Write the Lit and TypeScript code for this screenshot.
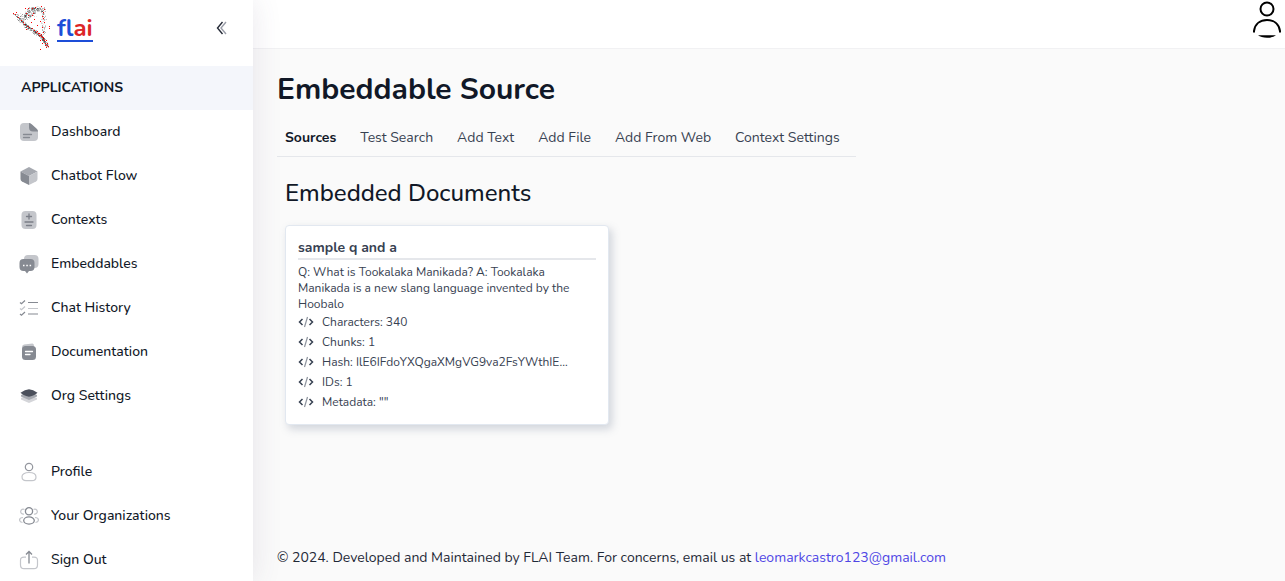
import { LitElement, html, svg, css } from 'lit';
import { customElement, state } from 'lit/decorators.js';

const icons = {
  dashboard: svg`
    <path d="M5 1h6l8 8v6a4 4 0 0 1-4 4H5a4 4 0 0 1-4-4V5a4 4 0 0 1 4-4z" fill="#c4c6cb"/>
    <path d="M10 1q1.500 0 3 1.500L18 7q1 1 1 2.500h-5a4 4 0 0 1-4-4z" fill="#868a92"/>
    <path d="M4.500 12.500h8M4.500 15.500h6" stroke="#868a92" stroke-width="1.300" stroke-linecap="round"/>`,
  cube: svg`
    <path d="M10 1l8.500 4.500L10 10 1.500 5.500z" fill="#a6a9b0"/>
    <path d="M1.500 5.500L10 10v9L3 15.500q-1.500-.8-1.500-2.500z" fill="#868a92"/>
    <path d="M18.500 5.500L10 10v9l7-3.500q1.500-.8 1.500-2.500z" fill="#c4c6cb"/>`,
  contexts: svg`
    <rect x="2.500" y="1" width="15" height="18" rx="4" fill="#c4c6cb"/>
    <path d="M10 4v5M7.500 6.500h5M6 12h8M7.500 15.500h5" stroke="#7b7f88" stroke-width="1.300" stroke-linecap="round"/>`,
  chat: svg`
    <rect x="5" y="1" width="14.500" height="13" rx="4" fill="#c4c6cb"/>
    <path d="M4.500 5h7a4 4 0 0 1 4 4v4a4 4 0 0 1-4 4H10l-2 2.500L6 17H4.500a4 4 0 0 1-4-4V9a4 4 0 0 1 4-4z" fill="#868a92"/>
    <path d="M4 11.500h1.500M7.300 11.500h1.500M10.600 11.500h1.500" stroke="#fff" stroke-width="1.500"/>`,
  list: svg`
    <path d="M1 4.500l1.500 1.300L6 2.500M1 16l1.500 1.300L6 14M9 4.500h10M9 16h10" fill="none" stroke="#868a92" stroke-width="1.200"/>
    <path d="M1 10.500l1.500 1.300L6 8.500M9 10.500h10" fill="none" stroke="#c4c6cb" stroke-width="1.200"/>`,
  document: svg`
    <path d="M5 2.500L13.500 1.500Q15 1.500 15 4v4H3V5q0-2 2-2.500z" fill="#c4c6cb"/>
    <rect x="3" y="4" width="14" height="14" rx="3.500" fill="#868a92"/>
    <path d="M6.500 9.500h7M6.500 12.500h4.500" stroke="#fff" stroke-width="1.300" stroke-linecap="round"/>`,
  layers: svg`
    <path d="M2 12l8-3 8 3v1.500L10 17l-8-3.500z" fill="#d4d5d9"/>
    <path d="M2 9l8-3 8 3v1.500L10 14l-8-3.500z" fill="#a6a9b0"/>
    <path d="M1.500 6.800Q6 3.500 10 3.200q4 .3 8.500 3.600Q14 10.500 10 10.700 6 10.500 1.500 6.800z" fill="#4b505c"/>`,
  profile: svg`
    <circle cx="10" cy="5" r="3.700" fill="none" stroke="#93969e" stroke-width="1.200"/>
    <path d="M3 14.500c0-2 2.500-4 7-4s7 2 7 4.500-1.500 3.700-4 3.700H7c-2.500 0-4-1.200-4-4.200z" fill="none" stroke="#c4c6cb" stroke-width="1.200"/>`,
  people: svg`
    <path d="M5.500 3.500A2.500 2.500 0 1 0 5 8M14.500 3.500A2.500 2.500 0 1 1 15 8M4 11.500c-5 .5-4 4.500-.5 5M16 11.500c5 .5 4 4.500.5 5" fill="none" stroke="#c4c6cb" stroke-width="1.200"/>
    <circle cx="10" cy="5.300" r="3.600" fill="none" stroke="#868a92" stroke-width="1.300"/>
    <ellipse cx="10" cy="14.500" rx="5.300" ry="3.600" fill="none" stroke="#868a92" stroke-width="1.300"/>`,
  signout: svg`
    <path d="M7 7.200H5q-3.500 0-3.500 3V15q0 3.700 3.500 3.700h10q3.500 0 3.500-3.700v-4.800q0-3-3.500-3h-2" fill="none" stroke="#c4c6cb" stroke-width="1.200"/>
    <path d="M10 13.500V1.500M7 4.500l3-3 3 3" fill="none" stroke="#868a92" stroke-width="1.300"/>`,
};

type IconName = keyof typeof icons;

const applications: { icon: IconName; label: string }[] = [
  { icon: 'dashboard', label: 'Dashboard' },
  { icon: 'cube', label: 'Chatbot Flow' },
  { icon: 'contexts', label: 'Contexts' },
  { icon: 'chat', label: 'Embeddables' },
  { icon: 'list', label: 'Chat History' },
  { icon: 'document', label: 'Documentation' },
  { icon: 'layers', label: 'Org Settings' },
];

const account: { icon: IconName; label: string }[] = [
  { icon: 'profile', label: 'Profile' },
  { icon: 'people', label: 'Your Organizations' },
  { icon: 'signout', label: 'Sign Out' },
];

const tabs = ['Sources', 'Test Search', 'Add Text', 'Add File', 'Add From Web', 'Context Settings'];

const facts = [
  'Characters: 340',
  'Chunks: 1',
  'Hash: IlE6IFdoYXQgaXMgVG9va2FsYWthIE...',
  'IDs: 1',
  'Metadata: ""',
];

/* Red specks of the logo mark, on a 40 x 46 grid. */
const specks: [number, number][] = [
  [1, 9], [3, 10], [4, 8], [6, 13], [9, 16], [11, 18], [13, 4], [16, 4], [20, 4], [23, 3],
  [29, 2], [32, 5], [31, 8], [21, 9], [20, 11], [16, 11], [14, 9], [30, 12], [31, 14], [22, 15],
  [28, 17], [32, 18], [37, 22], [37, 24], [12, 20], [15, 22], [17, 23], [20, 24], [22, 26], [25, 27],
  [26, 29], [27, 29], [28, 31], [29, 32], [30, 33], [31, 35], [32, 36], [33, 39], [35, 39], [28, 36],
  [35, 41], [28, 45], [30, 23], [31, 28], [33, 41], [25, 21], [19, 18], [14, 25], [24, 28], [27, 31],
  [34, 43], [36, 42], [30, 39], [29, 30], [31, 33], [34, 36],
];

/* Grey dust: curves given as start, control, end, spread and count. */
const trails = [
  [3, 10, 10, 20, 27, 31, 2, 200],
  [12, 20, 22, 26, 32, 35, 2, 160],
  [27, 30, 32, 36, 35, 42, 2, 130],
  [12, 13, 18, 0, 30, 6, 3, 200],
  [30, 5, 32, 18, 31, 30, 3, 80],
  [8, 12, 17, 14, 24, 5, 4, 120],
];

const dust = (() => {
  let seed = 11;
  const next = () => (seed = (seed * 16807) % 2147483647) / 2147483647;
  const out: { x: number; y: number; opacity: number }[] = [];
  for (const [x0, y0, x1, y1, x2, y2, spread, count] of trails) {
    for (let i = 0; i < count; i++) {
      const t = next();
      const u = 1 - t;
      out.push({
        x: Math.round(u * u * x0 + 2 * u * t * x1 + t * t * x2 + (next() + next() - 1) * spread),
        y: Math.round(u * u * y0 + 2 * u * t * y1 + t * t * y2 + (next() + next() - 1) * spread),
        opacity: [0.08, 0.14, 0.2, 0.3][Math.floor(next() * 4)],
      });
    }
  }
  return out;
})();

const base = css`
  :host { display: block; }
  *, *::before, *::after { box-sizing: border-box; }
  a { color: inherit; text-decoration: none; }
  h1, h2, h3, p, ul { margin: 0; padding: 0; font-weight: inherit; }
  ul { list-style: none; }
  button { border: 0; padding: 0; background: none; color: inherit; font: inherit; cursor: pointer; }
  svg { display: block; flex: none; }
`;

@customElement('side-bar')
export class SideBar extends LitElement {
  static styles = [base, css`
    :host { background: #fff; box-shadow: 0 0 28px rgba(82, 63, 105, 0.12); }
    .brand { display: flex; align-items: flex-start; justify-content: space-between; height: 66px; padding: 4px 25px 0 12px; }
    .logo { display: flex; align-items: flex-start; gap: 5px; }
    .name { margin-top: 9px; height: 29px; border-bottom: 2px solid #1d4ed8; color: #1d4ed8; font-size: 24px; line-height: 30px; font-weight: 700; }
    .accent { color: #dc2626; }
    .collapse { margin-top: 16px; }
    .heading { height: 44px; padding-left: 21px; background: #f4f6fb; font-size: 14px; line-height: 43px; font-weight: 700; }
    .item { display: flex; align-items: center; gap: 12px; height: 44px; padding-left: 19px; font-size: 14px; line-height: 20px; font-weight: 500; }
    .label { margin-bottom: 1px; }
    .account { margin-top: 32px; }
  `];

  private items(list: typeof applications) {
    return list.map(({ icon, label }) => html`
      <li><a class="item" href="#">
        <svg width="20" height="20" viewBox="0 0 20 20" aria-hidden="true">${icons[icon]}</svg>
        <span class="label">${label}</span>
      </a></li>`);
  }

  render() {
    return html`
      <div class="brand">
        <a class="logo" href="#">
          <svg width="40" height="46" viewBox="0 0 40 46" shape-rendering="crispEdges" aria-hidden="true">
            ${dust.map((d) => svg`<rect x=${d.x} y=${d.y} width="1" height="1" fill="#222" fill-opacity=${d.opacity}/>`)}
            ${specks.map(([x, y]) => svg`<rect x=${x} y=${y} width="1" height="1" fill="#f00"/>`)}
          </svg>
          <span class="name">fl<span class="accent">ai</span></span>
        </a>
        <button class="collapse" aria-label="Collapse menu">
          <svg width="14" height="16" viewBox="0 0 14 16" fill="none" stroke-width="1.400">
            <path d="M12 2L7 8l5 6" stroke="#9a9da8"/><path d="M8.500 2l-5 6 5 6" stroke="#252a37"/>
          </svg>
        </button>
      </div>
      <h2 class="heading">APPLICATIONS</h2>
      <nav>
        <ul>${this.items(applications)}</ul>
        <ul class="account">${this.items(account)}</ul>
      </nav>`;
  }
}

@customElement('document-card')
export class DocumentCard extends LitElement {
  static styles = [base, css`
    :host { width: 324px; padding: 12px; border: 1px solid #e2e8f0; border-radius: 4px; background: #fff; color: #374151; box-shadow: 3px 4px 8px rgba(100, 116, 139, 0.28); }
    .title { padding-bottom: 1px; border-bottom: 2px solid #e5e7eb; font-size: 14px; line-height: 19px; font-weight: 700; }
    .excerpt { margin-top: 4px; font-size: 12px; line-height: 16px; }
    .fact { display: flex; align-items: center; gap: 8px; font-size: 12px; line-height: 20px; }
  `];

  render() {
    return html`
      <h3 class="title">sample q and a</h3>
      <p class="excerpt">Q: What is Tookalaka Manikada? A: Tookalaka Manikada is a new slang language invented by the Hoobalo</p>
      <ul>
        ${facts.map((fact) => html`
          <li class="fact">
            <svg width="16" height="16" viewBox="0 0 16 16" fill="none" aria-hidden="true">
              <path d="M4.500 5l-3 3 3 3M11.500 5l3 3-3 3" stroke="#374151" stroke-width="1.500"/>
              <path d="M9.500 3l-3 10" stroke="#8f959f" stroke-width="1.200"/>
            </svg>
            <span>${fact}</span>
          </li>`)}
      </ul>`;
  }
}

@customElement('app-root')
export class AppRoot extends LitElement {
  static styles = [base, css`
    :host { display: grid; grid-template-columns: 253px minmax(0, 1fr); min-height: 100vh; background: #fafafa; color: #111827; font-family: Nunito, Lato, sans-serif; font-size: 14px; line-height: 20px; }
    side-bar { z-index: 1; }
    .page { display: flex; flex-direction: column; }
    .topbar { display: flex; justify-content: flex-end; height: 49px; padding-right: 3px; border-bottom: 1px solid #f1f1f3; background: #fff; }
    .user { align-self: flex-start; }
    .content { flex: 1; padding: 21px 24px 0; }
    .title { font-size: 30px; line-height: 40px; font-weight: 700; }
    .tabs { display: inline-flex; gap: 24px; margin-top: 8px; padding: 10px 16px 9px 8px; border-bottom: 1px solid #e5e7eb; }
    .tab { border: 0; color: #374151; line-height: 19px; }
    .tab[aria-selected='true'] { color: #111827; font-weight: 700; }
    .panel { display: flex; flex-direction: column; align-items: flex-start; gap: 16px; padding: 20px 8px; }
    .subtitle { font-size: 24px; line-height: 32px; font-weight: 500; }
    .footer { padding: 0 24px 14px; color: #1f2937; }
    .mail { color: #4f46e5; }
  `];

  @state() private selected = 0;

  render() {
    return html`
      <side-bar></side-bar>
      <div class="page">
        <header class="topbar">
          <button class="user" aria-label="Account">
            <svg width="30" height="38" viewBox="0 0 30 38" fill="none" stroke="#000" stroke-width="2">
              <circle cx="15" cy="9" r="6.500"/>
              <path d="M2 32.500V31C3 23.500 8.500 20 15 20s12 3.500 13 11v1.500"/>
              <path d="M6 35.300h18q-3 2.400-9 2.400t-9-2.400z" fill="#000" stroke="none"/>
            </svg>
          </button>
        </header>
        <main class="content">
          <h1 class="title">Embeddable Source</h1>
          <div class="tabs" role="tablist">
            ${tabs.map((tab, i) => html`
              <button class="tab" role="tab" aria-selected=${i === this.selected ? 'true' : 'false'}
                @click=${() => { this.selected = i; }}>${tab}</button>`)}
          </div>
          <section class="panel">
            <h2 class="subtitle">Embedded Documents</h2>
            <document-card></document-card>
          </section>
        </main>
        <footer class="footer">© 2024. Developed and Maintained by FLAI Team. For concerns, email us at <a class="mail" href="mailto:leomarkcastro123@gmail.com">leomarkcastro123@gmail.com</a></footer>
      </div>`;
  }
}
